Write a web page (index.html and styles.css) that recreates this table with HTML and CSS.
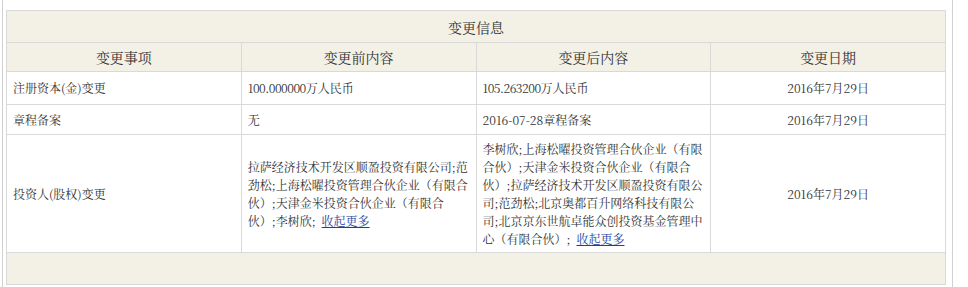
FILE: index.html
```html
<!DOCTYPE html>
<html lang="zh-CN">
<head>
<meta charset="utf-8">
<title>变更信息</title>
<link rel="stylesheet" href="styles.css">
</head>
<body>
<div class="panel">
  <table class="info-table">
    <colgroup>
      <col class="c1"><col class="c2"><col class="c3"><col class="c4">
    </colgroup>
    <thead>
      <tr class="title-row"><th colspan="4">变更信息</th></tr>
      <tr class="head-row">
        <th>变更事项</th>
        <th>变更前内容</th>
        <th>变更后内容</th>
        <th>变更日期</th>
      </tr>
    </thead>
    <tbody>
      <tr class="r1">
        <td>注册资本(金)变更</td>
        <td><span class="num">100.000000</span>万人民币</td>
        <td><span class="num">105.263200</span>万人民币</td>
        <td class="date">2016年7月29日</td>
      </tr>
      <tr class="r2">
        <td>章程备案</td>
        <td>无</td>
        <td>2016-07-28章程备案</td>
        <td class="date">2016年7月29日</td>
      </tr>
      <tr class="r3">
        <td>投资人(股权)变更</td>
        <td>拉萨经济技术开发区顺盈投资有限公司;范劲松;上海松曜投资管理合伙企业（有限合伙）;天津金米投资合伙企业（有限合伙）;李树欣;<a href="#" class="more">收起更多</a></td>
        <td>李树欣;上海松曜投资管理合伙企业（有限合伙）;天津金米投资合伙企业（有限合伙）;拉萨经济技术开发区顺盈投资有限公司;范劲松;北京奥都百升网络科技有限公司;北京京东世航卓能众创投资基金管理中心（有限合伙）;<a href="#" class="more">收起更多</a></td>
        <td class="date">2016年7月29日</td>
      </tr>
    </tbody>
    <tfoot>
      <tr class="foot-row"><td colspan="4"></td></tr>
    </tfoot>
  </table>
</div>
</body>
</html>
```

FILE: styles.css
```css
html, body {
  margin: 0;
  padding: 0;
  background: #ffffff;
}

body {
  font-family: "Noto Serif CJK SC", "Noto Sans CJK SC", serif;
  color: #333333;
  font-size: 12px;
}

.panel {
  margin-left: 2px;
  width: 941px;
  min-height: 277px;
  border-left: 1px solid #d0d0d0;
  border-right: 1px solid #d0d0d0;
  padding: 10px 5px 0 3px;
  box-sizing: content-box;
}

.info-table {
  width: 940px;
  border-collapse: collapse;
  table-layout: fixed;
}

.info-table th,
.info-table td {
  border: 1px solid #d9d9d9;
  padding: 0 6px;
  vertical-align: middle;
  line-height: 18px;
}

.info-table th {
  background: #f3f1e6;
  font-weight: normal;
  font-size: 14px;
  text-align: center;
  color: #333333;
}

.title-row th {
  height: 31px;
}

.head-row th {
  height: 28px;
}

.r1 td {
  height: 32px;
}

.r2 td {
  height: 29px;
}

.r3 td {
  height: 117px;
}

.num {
  letter-spacing: -0.5px;
}

.date {
  text-align: center;
}

.foot-row td {
  background: #f3f1e6;
  height: 31px;
}

.more {
  display: inline-block;
  margin-left: 6px;
  line-height: 16px;
  color: #1d3f9e;
  text-decoration: underline;
}
```
